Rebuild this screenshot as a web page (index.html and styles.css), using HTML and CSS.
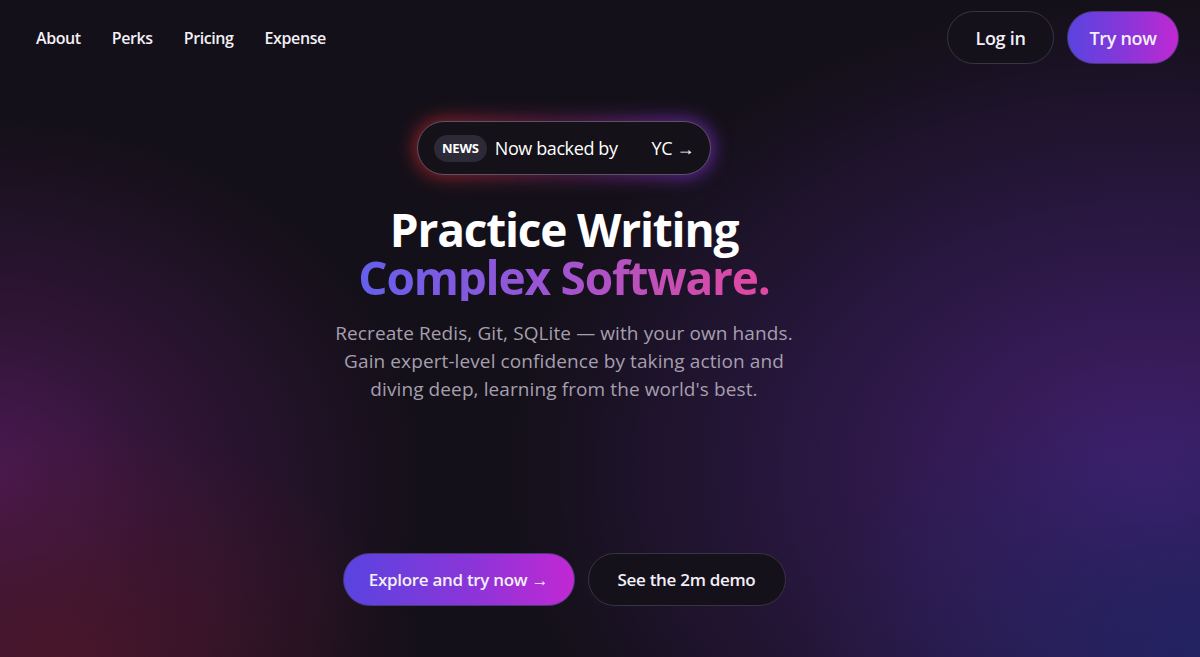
FILE: index.html
```html
<!DOCTYPE html>
<html lang="en">
<head>
<meta charset="utf-8">
<title>Practice Writing Complex Software</title>
<link rel="stylesheet" href="styles.css">
</head>
<body>
<div class="page">
  <div class="bg"></div>
  <header class="topbar">
    <nav class="nav">
      <a href="#" class="nav-link">About</a>
      <a href="#" class="nav-link">Perks</a>
      <a href="#" class="nav-link">Pricing</a>
      <a href="#" class="nav-link">Expense</a>
    </nav>
    <div class="actions">
      <a href="#" class="btn btn-ghost btn-sm">Log in</a>
      <a href="#" class="btn btn-grad btn-sm">Try now</a>
    </div>
  </header>
  <main class="hero">
    <a href="#" class="badge">
      <span class="badge-tag">NEWS</span>
      <span class="badge-text">Now backed by</span>
      <span class="badge-yc">YC →</span>
    </a>
    <h1 class="title">
      <span class="title-line">Practice Writing</span>
      <span class="title-grad">Complex Software.</span>
    </h1>
    <p class="lead">Recreate Redis, Git, SQLite — with your own hands.<br>Gain expert-level confidence by taking action and<br>diving deep, learning from the world's best.</p>
    <div class="cta">
      <a href="#" class="btn btn-grad btn-lg">Explore and try now →</a>
      <a href="#" class="btn btn-ghost btn-lg btn-demo">See the 2m demo</a>
    </div>
  </main>
</div>
</body>
</html>
```

FILE: styles.css
```css
* { box-sizing: border-box; }
html, body { margin: 0; padding: 0; }
body {
  background: #141019;
  font-family: "Open Sans", "Noto Sans", sans-serif;
  color: #fff;
}
a { color: inherit; text-decoration: none; }

.page {
  position: relative;
  width: 1200px;
  height: 657px;
  overflow: hidden;
  background: #141019;
}
.bg {
  position: absolute;
  inset: 0;
  background:
    radial-gradient(ellipse 360px 240px at 60px 660px, rgba(78, 22, 40, 0.85), rgba(78, 22, 40, 0.4) 50%, transparent 100%),
    radial-gradient(ellipse 440px 360px at -20px 480px, rgba(80, 26, 88, 0.95), rgba(80, 26, 88, 0.45) 45%, transparent 100%),
    radial-gradient(ellipse 400px 280px at 1200px 660px, rgba(34, 36, 100, 0.95), rgba(34, 36, 100, 0.5) 45%, transparent 100%),
    radial-gradient(ellipse 640px 470px at 1150px 470px, rgba(66, 31, 110, 1), rgba(66, 31, 110, 0.55) 45%, transparent 100%);
  z-index: 0;
}

.topbar {
  position: relative;
  z-index: 1;
  display: flex;
  align-items: center;
  justify-content: space-between;
  padding: 11px 21px 0 36px;
}
.nav { display: flex; gap: 31px; }
.nav-link {
  font-size: 16px;
  font-weight: 600;
  color: #f2eff6;
  letter-spacing: -0.4px;
}
.actions { display: flex; gap: 13px; }

.btn {
  display: inline-flex;
  align-items: center;
  justify-content: center;
  border-radius: 999px;
  font-weight: 600;
  color: #f3eff8;
  letter-spacing: -0.3px;
  white-space: nowrap;
}
.btn-ghost {
  border: 1px solid #3a3344;
  background: #15111b;
}
.btn-grad {
  background: linear-gradient(90deg, #5944e0 0%, #8b35d8 55%, #c128d3 100%);
  border: 1px solid #4a3a78;
}
.btn-sm {
  height: 53px;
  font-size: 18px;
  padding: 0;
}
.btn-sm.btn-ghost { width: 107px; }
.btn-sm.btn-grad { width: 112px; }

.hero {
  position: relative;
  z-index: 1;
  display: flex;
  flex-direction: column;
  align-items: center;
  padding-top: 57px;
  padding-right: 72px;
}

.badge {
  position: relative;
  display: flex;
  align-items: center;
  height: 54px;
  width: 294px;
  padding: 0 16px;
  border-radius: 999px;
  border: 1px solid #5b5364;
  background: #141118;
}
.badge::before {
  content: "";
  position: absolute;
  inset: -3px;
  border-radius: 999px;
  background: linear-gradient(90deg, rgba(200, 40, 40, 0.75), rgba(150, 40, 120, 0.55), rgba(130, 50, 220, 0.75));
  filter: blur(9px);
  z-index: -1;
}
.badge-tag {
  display: inline-flex;
  align-items: center;
  justify-content: center;
  height: 27px;
  padding: 0 8px;
  border-radius: 999px;
  background: #2d2a37;
  font-size: 13px;
  font-weight: 700;
  letter-spacing: -0.2px;
}
.badge-text {
  margin-left: 8px;
  font-size: 18px;
  letter-spacing: -0.4px;
}
.badge-yc {
  margin-left: auto;
  font-size: 18px;
  letter-spacing: -0.4px;
}

.title {
  margin: 30px 0 0;
  display: flex;
  flex-direction: column;
  align-items: center;
  font-size: 46px;
  font-weight: 700;
  line-height: 48px;
  letter-spacing: -1.2px;
}
.title-line { color: #ffffff; }
.title-grad {
  background: linear-gradient(90deg, #6360ec 0%, #9a55d4 45%, #c64fb4 75%, #e3479f 100%);
  -webkit-background-clip: text;
  background-clip: text;
  color: transparent;
}

.lead {
  margin: 18px 0 0;
  text-align: center;
  font-size: 19px;
  line-height: 28px;
  color: #a69fae;
  letter-spacing: 0.1px;
}

.cta {
  display: flex;
  gap: 13px;
  margin-top: 150px;
}
.btn-lg {
  height: 53px;
  font-size: 17px;
  padding: 0;
}
.btn-lg.btn-grad { width: 232px; }
.btn-demo { width: 198px; }
```
